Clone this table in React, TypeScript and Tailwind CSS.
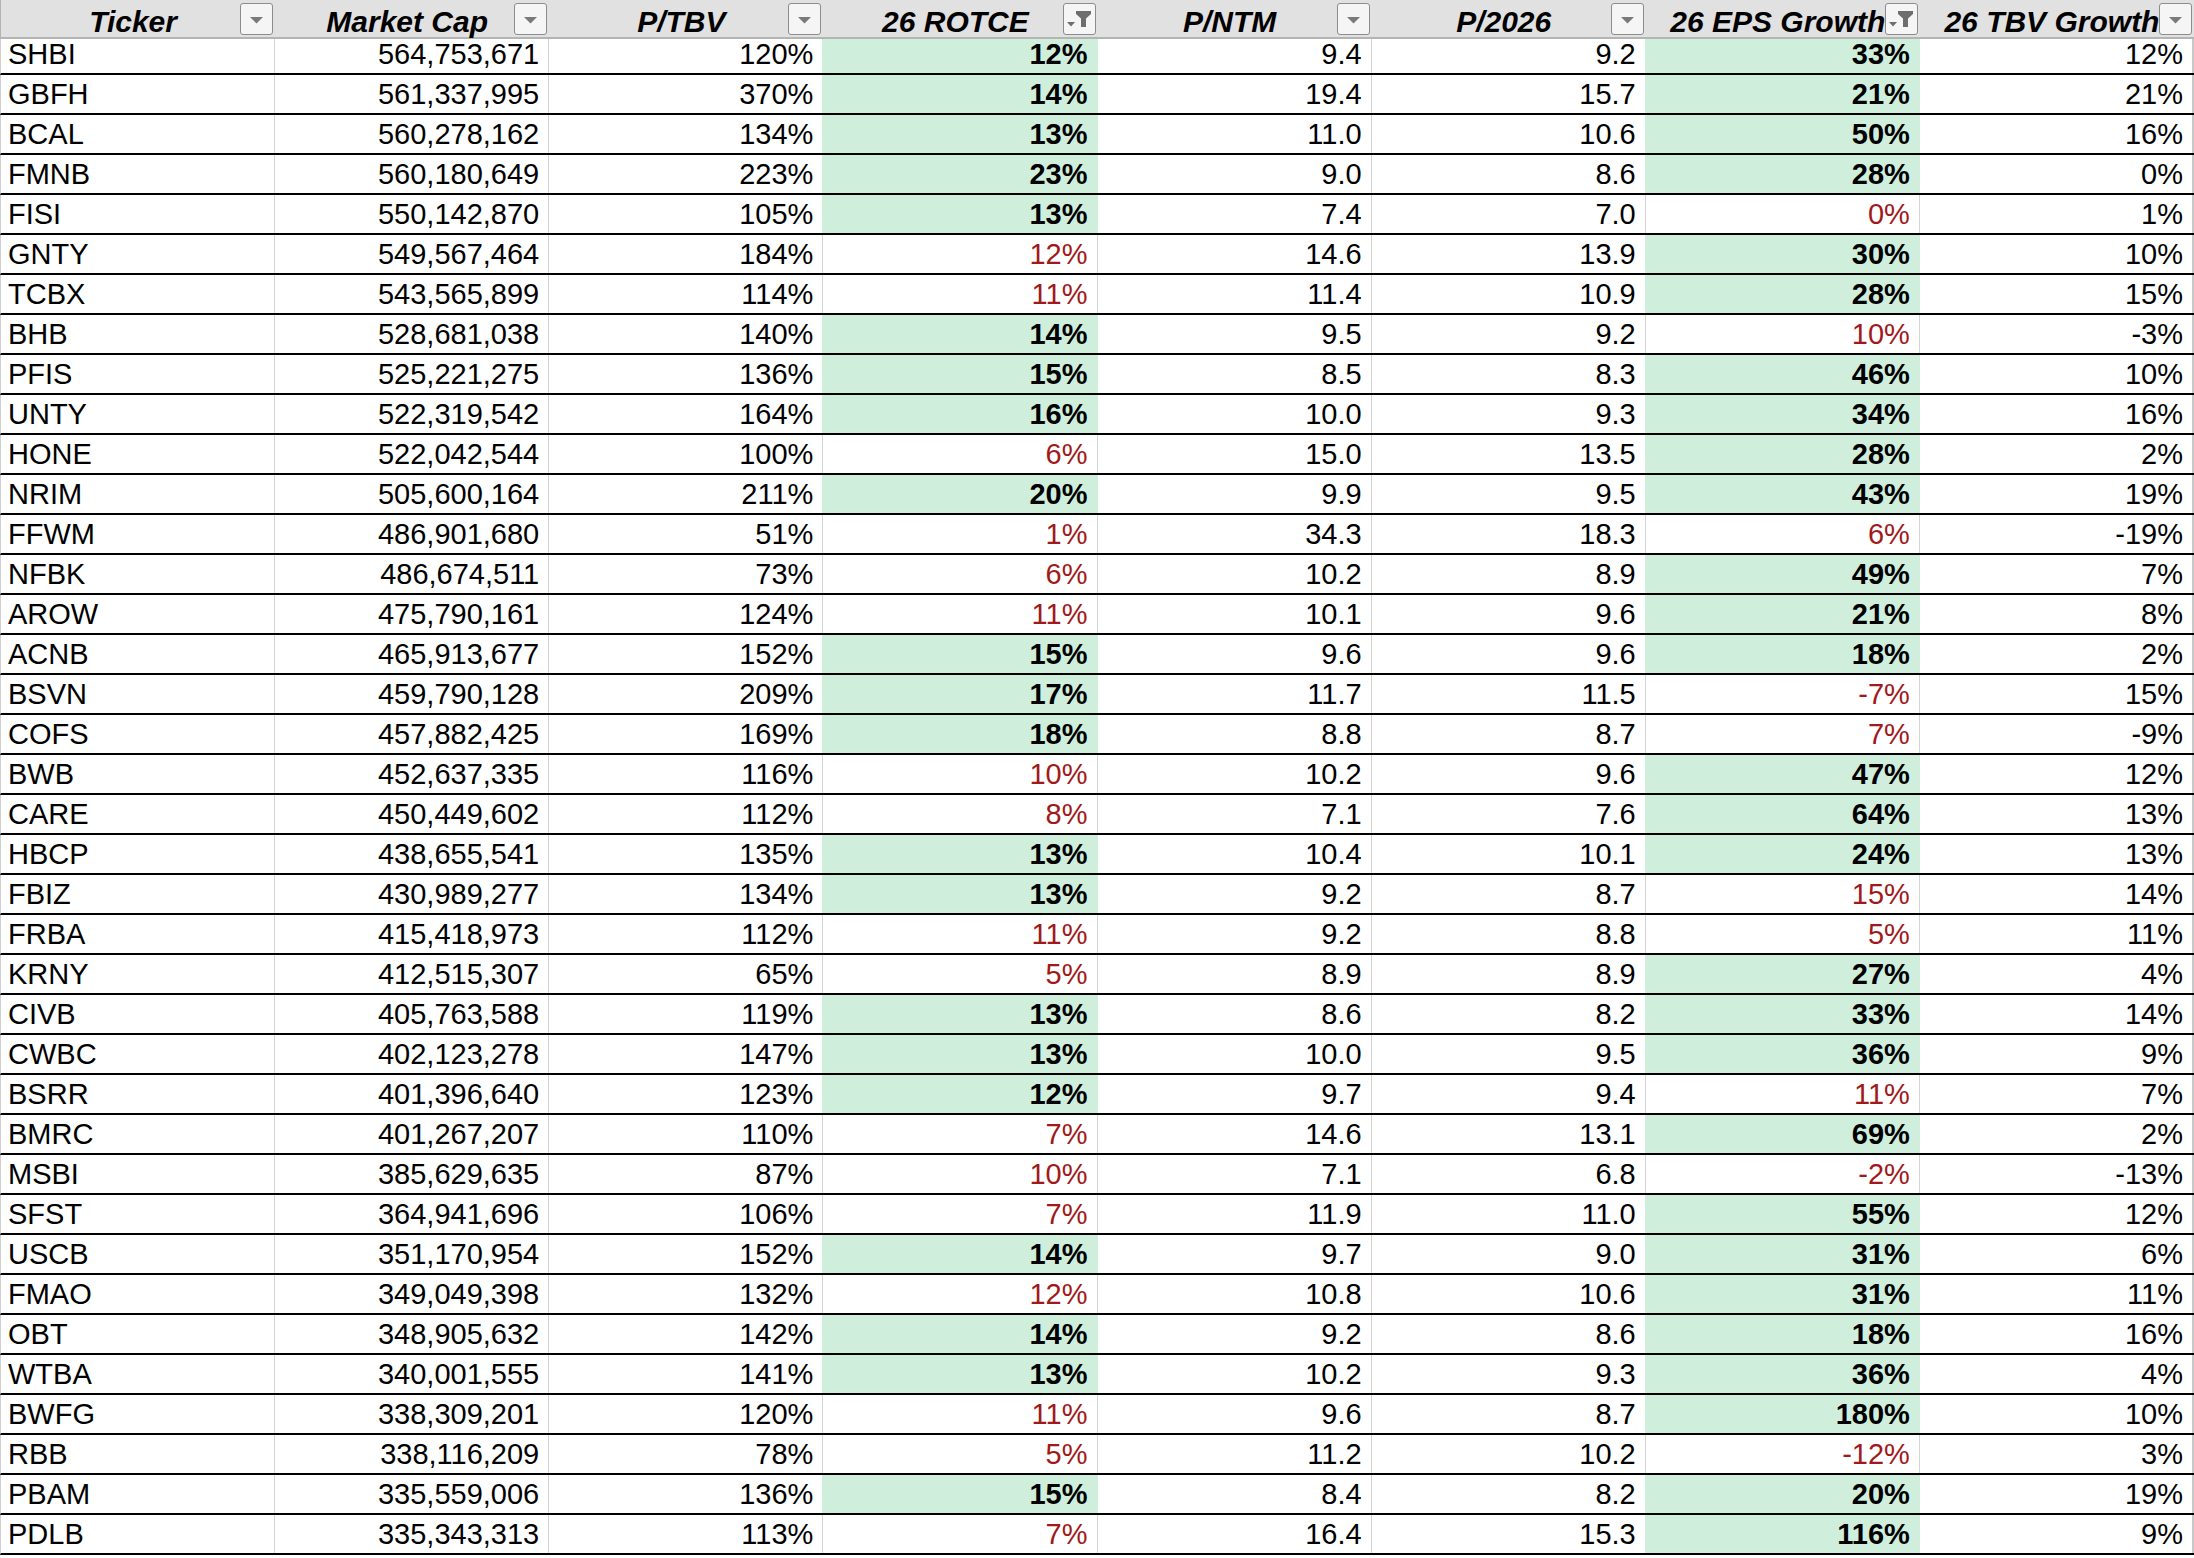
import { ReactNode } from "react";

type Flag = "G" | "R";

// ticker, market cap, p/tbv, rotce, rotce flag, p/ntm, p/2026, eps growth, eps flag, tbv growth
type Row = [string, string, string, string, Flag, string, string, string, Flag, string];

const rows: Row[] = [
  ["SHBI", "564,753,671", "120%", "12%", "G", "9.4", "9.2", "33%", "G", "12%"],
  ["GBFH", "561,337,995", "370%", "14%", "G", "19.4", "15.7", "21%", "G", "21%"],
  ["BCAL", "560,278,162", "134%", "13%", "G", "11.0", "10.6", "50%", "G", "16%"],
  ["FMNB", "560,180,649", "223%", "23%", "G", "9.0", "8.6", "28%", "G", "0%"],
  ["FISI", "550,142,870", "105%", "13%", "G", "7.4", "7.0", "0%", "R", "1%"],
  ["GNTY", "549,567,464", "184%", "12%", "R", "14.6", "13.9", "30%", "G", "10%"],
  ["TCBX", "543,565,899", "114%", "11%", "R", "11.4", "10.9", "28%", "G", "15%"],
  ["BHB", "528,681,038", "140%", "14%", "G", "9.5", "9.2", "10%", "R", "-3%"],
  ["PFIS", "525,221,275", "136%", "15%", "G", "8.5", "8.3", "46%", "G", "10%"],
  ["UNTY", "522,319,542", "164%", "16%", "G", "10.0", "9.3", "34%", "G", "16%"],
  ["HONE", "522,042,544", "100%", "6%", "R", "15.0", "13.5", "28%", "G", "2%"],
  ["NRIM", "505,600,164", "211%", "20%", "G", "9.9", "9.5", "43%", "G", "19%"],
  ["FFWM", "486,901,680", "51%", "1%", "R", "34.3", "18.3", "6%", "R", "-19%"],
  ["NFBK", "486,674,511", "73%", "6%", "R", "10.2", "8.9", "49%", "G", "7%"],
  ["AROW", "475,790,161", "124%", "11%", "R", "10.1", "9.6", "21%", "G", "8%"],
  ["ACNB", "465,913,677", "152%", "15%", "G", "9.6", "9.6", "18%", "G", "2%"],
  ["BSVN", "459,790,128", "209%", "17%", "G", "11.7", "11.5", "-7%", "R", "15%"],
  ["COFS", "457,882,425", "169%", "18%", "G", "8.8", "8.7", "7%", "R", "-9%"],
  ["BWB", "452,637,335", "116%", "10%", "R", "10.2", "9.6", "47%", "G", "12%"],
  ["CARE", "450,449,602", "112%", "8%", "R", "7.1", "7.6", "64%", "G", "13%"],
  ["HBCP", "438,655,541", "135%", "13%", "G", "10.4", "10.1", "24%", "G", "13%"],
  ["FBIZ", "430,989,277", "134%", "13%", "G", "9.2", "8.7", "15%", "R", "14%"],
  ["FRBA", "415,418,973", "112%", "11%", "R", "9.2", "8.8", "5%", "R", "11%"],
  ["KRNY", "412,515,307", "65%", "5%", "R", "8.9", "8.9", "27%", "G", "4%"],
  ["CIVB", "405,763,588", "119%", "13%", "G", "8.6", "8.2", "33%", "G", "14%"],
  ["CWBC", "402,123,278", "147%", "13%", "G", "10.0", "9.5", "36%", "G", "9%"],
  ["BSRR", "401,396,640", "123%", "12%", "G", "9.7", "9.4", "11%", "R", "7%"],
  ["BMRC", "401,267,207", "110%", "7%", "R", "14.6", "13.1", "69%", "G", "2%"],
  ["MSBI", "385,629,635", "87%", "10%", "R", "7.1", "6.8", "-2%", "R", "-13%"],
  ["SFST", "364,941,696", "106%", "7%", "R", "11.9", "11.0", "55%", "G", "12%"],
  ["USCB", "351,170,954", "152%", "14%", "G", "9.7", "9.0", "31%", "G", "6%"],
  ["FMAO", "349,049,398", "132%", "12%", "R", "10.8", "10.6", "31%", "G", "11%"],
  ["OBT", "348,905,632", "142%", "14%", "G", "9.2", "8.6", "18%", "G", "16%"],
  ["WTBA", "340,001,555", "141%", "13%", "G", "10.2", "9.3", "36%", "G", "4%"],
  ["BWFG", "338,309,201", "120%", "11%", "R", "9.6", "8.7", "180%", "G", "10%"],
  ["RBB", "338,116,209", "78%", "5%", "R", "11.2", "10.2", "-12%", "R", "3%"],
  ["PBAM", "335,559,006", "136%", "15%", "G", "8.4", "8.2", "20%", "G", "19%"],
  ["PDLB", "335,343,313", "113%", "7%", "R", "16.4", "15.3", "116%", "G", "9%"],
];

const headers: { label: string; filtered?: boolean }[] = [
  { label: "Ticker" },
  { label: "Market Cap" },
  { label: "P/TBV" },
  { label: "26 ROTCE", filtered: true },
  { label: "P/NTM" },
  { label: "P/2026" },
  { label: "26 EPS Growth", filtered: true },
  { label: "26 TBV Growth" },
];

function FilterButton({ filtered }: { filtered?: boolean }) {
  return (
    <div className="absolute right-[2px] top-[3px] h-[32px] w-[33px] rounded-[3px] border border-[#8c8c8c] bg-[#f5f5f5]">
      {filtered ? (
        <svg viewBox="0 0 31 30" className="h-full w-full">
          <path d="M3 18 H11 L7 22.5 Z" fill="#6e6e6e" />
          <path d="M12 7 H27 V10 L22 14.5 V23 H17 V14.5 L12 10 Z" fill="#6e6e6e" />
        </svg>
      ) : (
        <svg viewBox="0 0 31 30" className="h-full w-full">
          <path d="M9 13 H22 L15.5 19.5 Z" fill="#7a7a7a" />
        </svg>
      )}
    </div>
  );
}

function Cell({ children, className }: { children: ReactNode; className: string }) {
  return (
    <div className={`flex items-end pb-[4px] leading-none ${className}`}>
      {children}
    </div>
  );
}

export default function App() {
  return (
    <div className="min-h-screen bg-white font-['Liberation_Sans',Arial,sans-serif] text-[29px] text-black">
      <div className="grid h-[39px] grid-cols-8 border-b-2 border-l border-[#b4b4b4] bg-[#e1e1e1]">
        {headers.map((h) => (
          <div key={h.label} className="relative flex items-end justify-center pr-[10px] leading-none">
            <span className="text-[30px] font-bold italic">{h.label}</span>
            <FilterButton filtered={h.filtered} />
          </div>
        ))}
      </div>

      {rows.map((r, i) => {
        const [ticker, cap, ptbv, rotce, rotceFlag, pntm, p26, eps, epsFlag, tbv] = r;
        const rotceGreen = rotceFlag === "G";
        const epsGreen = epsFlag === "G";
        return (
          <div
            key={ticker}
            className={`grid grid-cols-8 border-b-2 border-l border-b-black border-l-[#cfcfcf] ${
              i === 0 ? "h-[36px]" : "h-[40px]"
            }`}
          >
            <Cell className="border-r border-[#d4d4d4] pl-[7px]">{ticker}</Cell>
            <Cell className="justify-end border-r border-[#d4d4d4] pr-[9px]">{cap}</Cell>
            <Cell
              className={`justify-end border-r pr-[9px] ${
                rotceGreen ? "border-[#cfefdc]" : "border-[#d4d4d4]"
              }`}
            >
              {ptbv}
            </Cell>
            <Cell
              className={
                rotceGreen
                  ? "justify-end border-r border-[#cfefdc] bg-[#cfefdc] pr-[9px] font-bold"
                  : "justify-end border-r border-[#d4d4d4] pr-[9px] text-[#a01a1c]"
              }
            >
              {rotce}
            </Cell>
            <Cell className="justify-end border-r border-[#d4d4d4] pr-[9px]">{pntm}</Cell>
            <Cell
              className={`justify-end border-r pr-[9px] ${
                epsGreen ? "border-[#cfefdc]" : "border-[#d4d4d4]"
              }`}
            >
              {p26}
            </Cell>
            <Cell
              className={
                epsGreen
                  ? "justify-end border-r border-[#cfefdc] bg-[#cfefdc] pr-[9px] font-bold"
                  : "justify-end border-r border-[#d4d4d4] pr-[9px] text-[#a01a1c]"
              }
            >
              {eps}
            </Cell>
            <Cell className="justify-end border-r-2 border-[#c8c8c8] pr-[9px]">{tbv}</Cell>
          </div>
        );
      })}
    </div>
  );
}
